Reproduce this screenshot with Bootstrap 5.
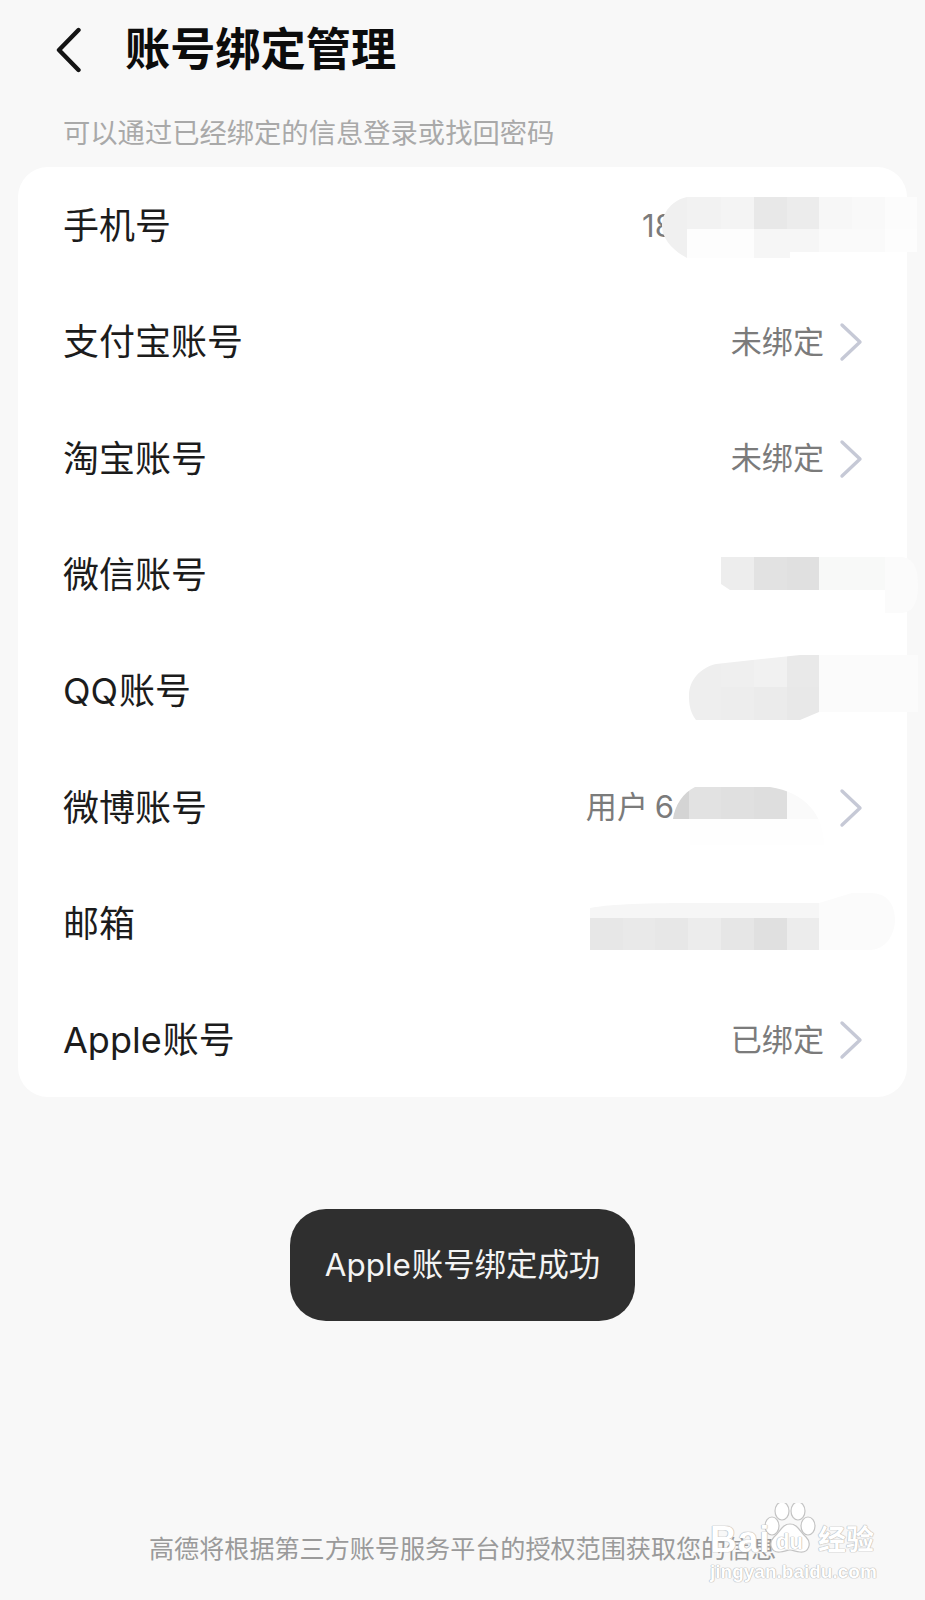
<!DOCTYPE html>
<html lang="zh">
<head>
<meta charset="utf-8">
<title>账号绑定管理</title>
<link href="https://cdn.jsdelivr.net/npm/bootstrap@5.3.0/dist/css/bootstrap.min.css" rel="stylesheet">
<style>
html,body{background:#f8f8f8;margin:0}
body{font-family:Inter,"Noto Sans CJK SC",sans-serif;color:#1c1c1c}
.screen{position:relative;width:925px;height:1600px;overflow:hidden}
.topbar{height:100px;padding-left:56px}
.back-icon{width:26px;height:46px;margin-right:43px;flex:none}
.page-title{font-size:45.2px;font-weight:700;line-height:1;color:#0c0c0c;margin:0}
.hint{font-size:27.3px;line-height:40px;color:#a9a9a9;padding-left:63px;margin:14px 0 13px}
.panel{margin:0 18px;width:889px;background:#fff;border-radius:30px}
.line{height:116.3px;padding:2px 44px 0 45px}
.line-name{font-size:36px;line-height:1}
.line-val{font-size:31.1px;line-height:1;color:#7b7b7b}
.chev{width:24px;height:40px;margin-left:15px;flex:none}
.no-chev{padding-right:189px}
.weibo-val{margin-right:150px;word-spacing:-2px}
.latin-gap{margin-right:1px}
.toast-box{width:345px;height:112px;margin:112px auto 0 290px;background:#2f2f2f;border-radius:36px;color:#f4f4f4;font-size:31.4px;line-height:1}
.foot-note{position:absolute;left:0;right:0;top:1533px;padding-left:149px;font-size:25.1px;line-height:32px;color:#9a9a9a}
.mosaic{position:absolute;left:0;top:0;pointer-events:none}
.wm{position:absolute;left:708px;top:1500px;width:172px;height:84px;color:#fff;font-family:"Liberation Sans",sans-serif;text-shadow:0 0 1px #b4b4b4,0 0 1px #b4b4b4,0 0 1px #b4b4b4}
.wm svg{position:absolute;left:52px;top:3px}
.wm-bai{position:absolute;left:2px;top:22px;font-size:37px;line-height:36px;font-weight:700;letter-spacing:1px}
.wm-du{position:absolute;left:68px;top:30px;font-size:22px;line-height:24px;font-weight:700}
.wm-jy{position:absolute;left:110px;top:22px;font-size:28px;line-height:32px;font-weight:700;font-family:"Noto Sans CJK SC",sans-serif}
.wm-url{position:absolute;left:2px;top:61px;font-size:19px;line-height:22px;font-weight:700}
</style>
</head>
<body>
<div class="screen">
  <div class="topbar d-flex align-items-center">
    <svg class="back-icon" viewBox="0 0 26 46" fill="none" stroke="#141414" stroke-width="4.4" stroke-linecap="round" stroke-linejoin="round"><path d="M22.5 3 3 23l19.5 20"/></svg>
    <h1 class="page-title">账号绑定管理</h1>
  </div>
  <p class="hint">可以通过已经绑定的信息登录或找回密码</p>
  <div class="panel">
    <div class="line d-flex align-items-center justify-content-between"><span class="line-name">手机号</span><span class="line-val no-chev">18</span></div>
    <div class="line d-flex align-items-center justify-content-between"><span class="line-name">支付宝账号</span><span class="d-flex align-items-center"><span class="line-val">未绑定</span><svg class="chev" viewBox="0 0 24 40" fill="none" stroke="#c6c9d6" stroke-width="3.4" stroke-linecap="round" stroke-linejoin="round"><path d="M3 3l18 17L3 37"/></svg></span></div>
    <div class="line d-flex align-items-center justify-content-between"><span class="line-name">淘宝账号</span><span class="d-flex align-items-center"><span class="line-val">未绑定</span><svg class="chev" viewBox="0 0 24 40" fill="none" stroke="#c6c9d6" stroke-width="3.4" stroke-linecap="round" stroke-linejoin="round"><path d="M3 3l18 17L3 37"/></svg></span></div>
    <div class="line d-flex align-items-center justify-content-between"><span class="line-name">微信账号</span></div>
    <div class="line d-flex align-items-center justify-content-between"><span class="line-name"><span class="latin-gap">QQ</span>账号</span></div>
    <div class="line d-flex align-items-center justify-content-between"><span class="line-name">微博账号</span><span class="d-flex align-items-center"><span class="line-val weibo-val">用户 6</span><svg class="chev" viewBox="0 0 24 40" fill="none" stroke="#c6c9d6" stroke-width="3.4" stroke-linecap="round" stroke-linejoin="round"><path d="M3 3l18 17L3 37"/></svg></span></div>
    <div class="line d-flex align-items-center justify-content-between"><span class="line-name">邮箱</span></div>
    <div class="line d-flex align-items-center justify-content-between"><span class="line-name"><span class="latin-gap">Apple</span>账号</span><span class="d-flex align-items-center"><span class="line-val">已绑定</span><svg class="chev" viewBox="0 0 24 40" fill="none" stroke="#c6c9d6" stroke-width="3.4" stroke-linecap="round" stroke-linejoin="round"><path d="M3 3l18 17L3 37"/></svg></span></div>
  </div>
  <div class="toast-box d-flex align-items-center justify-content-center"><span class="latin-gap">Apple</span>账号绑定成功</div>
  <div class="foot-note">高德将根据第三方账号服务平台的授权范围获取您的信息</div>

  <svg class="mosaic" width="925" height="1600" viewBox="0 0 925 1600" shape-rendering="crispEdges">
    <defs>
      <clipPath id="c1"><path d="M687 197H917V252H790V258H687C672 250 662 238 662 226C662 212 673 200 687 197Z"/></clipPath>
      <clipPath id="c2"><path d="M721 557H900C912 557 918 566 918 585C918 605 912 613 900 613H885V590H730L721 584Z"/></clipPath>
      <clipPath id="c3"><path d="M716 664L800 655H918V712H819L800 720H696C690 712 689 704 689 696C689 680 700 668 716 664Z"/></clipPath>
      <clipPath id="c4"><path d="M695 787H770C805 792 824 815 824 845H690V819H673C675 805 683 793 695 787Z"/></clipPath>
      <clipPath id="c5"><path d="M590 908C610 904 650 903 700 903H819L852 893H870C888 893 895 905 895 920C895 935 885 950 870 950H590Z"/></clipPath>
    </defs>
    <g clip-path="url(#c1)">
      <rect x="660" y="197" width="27" height="61" fill="#f0f0f0"/>
      <rect x="687" y="197" width="34" height="32" fill="#f2f2f2"/><rect x="721" y="197" width="33" height="32" fill="#f4f4f4"/><rect x="754" y="197" width="33" height="32" fill="#e8e8e8"/><rect x="787" y="197" width="32" height="32" fill="#ececec"/><rect x="819" y="197" width="33" height="32" fill="#f7f7f7"/><rect x="852" y="197" width="33" height="32" fill="#f9f9f9"/><rect x="885" y="197" width="40" height="32" fill="#fcfcfc"/>
      <rect x="687" y="229" width="67" height="29" fill="#fdfdfd"/><rect x="754" y="229" width="65" height="29" fill="#f6f6f6"/><rect x="819" y="229" width="66" height="29" fill="#fafafa"/><rect x="885" y="229" width="40" height="29" fill="#fdfdfd"/>
    </g>
    <g clip-path="url(#c2)">
      <rect x="721" y="557" width="33" height="33" fill="#ededed"/><rect x="754" y="557" width="33" height="33" fill="#e2e2e2"/><rect x="787" y="557" width="32" height="33" fill="#e0e0e0"/><rect x="819" y="557" width="66" height="33" fill="#f8f9f8"/><rect x="885" y="557" width="33" height="56" fill="#fbfbfb"/>
    </g>
    <g clip-path="url(#c3)">
      <rect x="689" y="655" width="32" height="65" fill="#eeeeee"/><rect x="721" y="655" width="33" height="32" fill="#efefef"/><rect x="754" y="655" width="33" height="32" fill="#f1f1f1"/><rect x="787" y="655" width="32" height="32" fill="#e9e9e9"/>
      <rect x="721" y="687" width="33" height="33" fill="#ededed"/><rect x="754" y="687" width="33" height="33" fill="#ebebeb"/><rect x="787" y="687" width="32" height="33" fill="#e8e8e8"/>
      <rect x="819" y="655" width="99" height="65" fill="#fbfbfb"/>
    </g>
    <g clip-path="url(#c4)">
      <rect x="673" y="787" width="16" height="32" fill="#d4d4d4"/><rect x="689" y="787" width="32" height="32" fill="#e2e2e2"/><rect x="721" y="787" width="33" height="32" fill="#e0e0e0"/><rect x="754" y="787" width="33" height="32" fill="#dedede"/>
      <rect x="787" y="787" width="40" height="32" fill="#fafafa"/><rect x="690" y="819" width="137" height="26" fill="#fefefe"/>
    </g>
    <g clip-path="url(#c5)">
      <rect x="590" y="903" width="229" height="15" fill="#f6f6f6"/>
      <rect x="590" y="918" width="33" height="32" fill="#e7e7e7"/><rect x="623" y="918" width="32" height="32" fill="#e9e9e9"/><rect x="655" y="918" width="33" height="32" fill="#e7e7e7"/><rect x="688" y="918" width="33" height="32" fill="#ececec"/><rect x="721" y="918" width="33" height="32" fill="#e6e6e6"/><rect x="754" y="918" width="33" height="32" fill="#e0e0e0"/><rect x="787" y="918" width="32" height="32" fill="#ececec"/>
      <rect x="819" y="890" width="80" height="60" fill="#fbfbfb"/>
    </g>
  </svg>

  <div class="wm">
    <svg width="70" height="62" viewBox="0 0 70 62" fill="#fff" stroke="#c4c4c4" stroke-width="1.2"><ellipse cx="22" cy="8" rx="7" ry="9"/><ellipse cx="38" cy="8" rx="7" ry="9"/><ellipse cx="12" cy="23" rx="7" ry="9"/><ellipse cx="48" cy="23" rx="7" ry="9"/><path d="M30 21c8 0 10 8 16 13 6 6 3 16-6 15-4 0-7-2-10-2s-6 2-10 2c-9 1-12-9-6-15 6-5 8-13 16-13Z"/></svg>
    <span class="wm-bai">Bai</span><span class="wm-du">du</span><span class="wm-jy">经验</span><span class="wm-url">jingyan.baidu.com</span>
  </div>
</div>
<script src="https://cdn.jsdelivr.net/npm/bootstrap@5.3.0/dist/js/bootstrap.bundle.min.js"></script>
</body>
</html>
